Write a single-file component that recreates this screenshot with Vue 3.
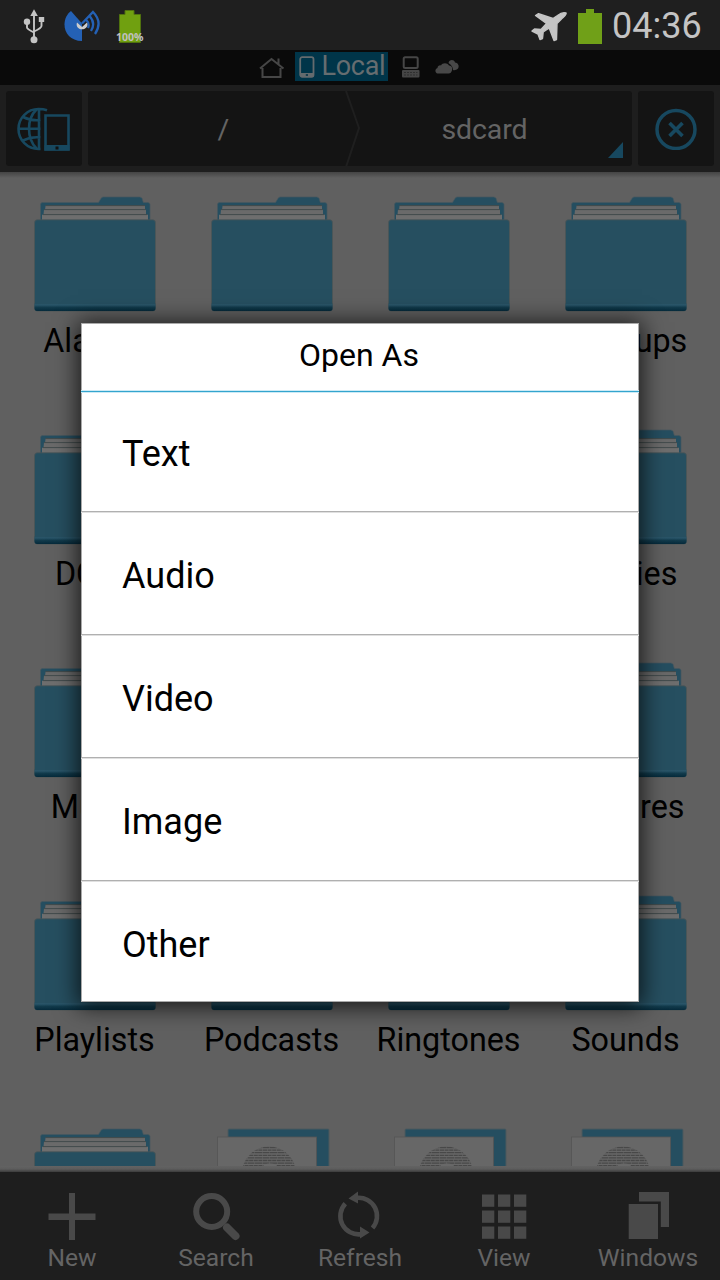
<script setup>
const rows = [
  ['Alarms', '', '', 'Backups'],
  ['DCIM', '', '', 'Movies'],
  ['Music', '', '', 'Pictures'],
  ['Playlists', 'Podcasts', 'Ringtones', 'Sounds'],
]
const lastRow = ['folder', 'file', 'file', 'file']
const items = [
  ...rows.flat().map((label) => ({ label, kind: 'folder' })),
  ...lastRow.map((kind) => ({ label: '', kind })),
]
const options = ['Text', 'Audio', 'Video', 'Image', 'Other']
const stripes = [0, 1, 2, 3, 4, 5, 6, 7]
const cells = [0, 16, 32]
</script>

<template>
  <div class="screen">
    <header class="status">
      <svg class="usb" width="24" height="36" viewBox="0 0 24 36" fill="none" stroke="#c4c4c4" stroke-width="1.9">
        <path d="M12 7V30M5 13v6.500q0 1.500 7 5M19.500 11v7q0 2-7.500 5.500" />
        <path d="M8.300 8 12 1.200 15.800 8z" fill="#c4c4c4" stroke="none" />
        <circle cx="5" cy="13.700" r="3.200" fill="#c4c4c4" stroke="none" />
        <rect x="16.800" y="9" width="5.400" height="5" fill="#c4c4c4" stroke="none" />
        <circle cx="12" cy="31.700" r="3.500" fill="#c4c4c4" stroke="none" />
      </svg>
      <svg class="dish" width="38" height="34" viewBox="0 0 38 34">
        <path d="M8 2 19 14.500v17.500C7.500 32 1.500 24 1.500 15.500 1.500 10 4 5 8 2z" fill="#2461b5" />
        <path d="M19 14.500 30 3Q40 13 32 25M26.500 7q6.500 7 1.500 15M23 10.500q4 4 2 8.500" fill="none" stroke="#2461b5" stroke-width="2.300" />
        <path d="M14 13.500 19 18l5-4.500c1.500 3.500-1 6.800-5 6.800s-6.300-3.300-5-6.800z" fill="#ccc" />
      </svg>
      <div class="battery-small">
        <svg width="22" height="33" viewBox="0 0 22 33">
          <path d="M.5 4.500H6V.5h9v4h6.500v28H.5z" fill="#70a010" stroke="#50720e" />
        </svg>
        <span class="pct">100%</span>
      </div>
      <svg class="plane" width="38" height="32" viewBox="0 0 38 32">
        <path d="M36 3c-2.500-1-6 .5-8.500 2.500l-4.500 3L8.500 3.700 5.500 5.500 16.500 13.500l-5.500 6-6.500-.5L2 21l6 3L10 29.500l2.500-1 .7-6.500 6-4L24 30.500l2.500-1 .5-16 4-4C34 6.500 37 4.500 36 3z" fill="#c4c4c4" stroke="#c4c4c4" stroke-width="1.400" stroke-linejoin="round" />
      </svg>
      <svg class="battery" width="24" height="35" viewBox="0 0 24 35">
        <path d="M0 4h8V0h8v4h8v31H0z" fill="#70a018" />
      </svg>
      <span class="clock">04:36</span>
    </header>

    <nav class="tabs">
      <svg class="home" width="26" height="22" viewBox="0 0 26 22" fill="none" stroke="#464646" stroke-width="2">
        <path d="M1 11.500 12.500 2l12 9.500M3.500 11v9h18v-9M19.500 7V1.500" />
      </svg>
      <div class="tab-active">
        <svg width="16" height="22" viewBox="0 0 16 22">
          <rect x="1.200" y="1.200" width="13.300" height="19.600" rx="2" fill="none" stroke="#646b6e" stroke-width="1.800" />
          <path d="M1.500 17h13v3.800h-13z" fill="#646b6e" />
          <rect x="6.800" y="18.200" width="2.200" height="1.600" fill="#063448" />
        </svg>
        <span class="tab-label">Local</span>
      </div>
      <svg class="pc" width="20" height="23" viewBox="0 0 20 23">
        <rect x="2.700" y="1.200" width="14" height="10.800" rx="1.500" fill="none" stroke="#464646" stroke-width="2" />
        <rect x="1" y="14" width="17.500" height="7.500" rx="1" fill="#464646" />
        <path d="M3 16.500h13.500M3 19h13.500" stroke="#2a2a2a" stroke-width=".8" stroke-dasharray="2 1" />
      </svg>
      <svg class="cloud" width="26" height="16" viewBox="0 0 26 16" fill="#484848">
        <path d="M3.500 14.500C1 14 .5 10 3.500 9c0-2 2-3 3.500-2.500C8 4 13 3 15 6.500c3.500 0 3.800 4 2.500 6-.8 2-2.500 2-4 2z" />
        <path d="M14.500 4C15 .5 20 0 21 3.500c3.500.5 4.500 4 3 6-1.500 1.500-3.500 2-5 1.500-.1-2.500-1-4.500-4.500-7z" />
      </svg>
    </nav>

    <div class="pathbar">
      <div class="tile globe">
        <svg width="54" height="46" viewBox="0 0 54 46" fill="none" stroke="#17485f" stroke-width="2.600">
          <path d="M23.500 43h-2a20 20 0 0 1 0-40q5 0 8.500 1.200M22 3v40M2 22.800h21.500M19.500 3.500C9.500 13 9.500 32 19.500 42.500M6 11q8 4 17.500 3M6 34.500q8-4 17.500-3" />
          <path d="M28.500 9.500h23V43.500H28.500z" />
          <path d="M27.500 39h25v5.500h-25z" fill="#17485f" stroke="none" />
          <rect x="38.500" y="40.500" width="3" height="3" fill="#111" stroke="none" />
        </svg>
      </div>
      <div class="crumbs">
        <span class="crumb root">/</span>
        <svg class="chevron" width="16" height="76" viewBox="0 0 16 76"><path d="M1 0 14 37 1 76" fill="none" stroke="#1f1f1f" stroke-width="2" /></svg>
        <span class="crumb leaf">sdcard</span>
        <svg class="corner" width="15" height="16" viewBox="0 0 15 16"><path d="M15 0v16H0z" fill="#17485f" /></svg>
      </div>
      <div class="tile">
        <svg width="42" height="42" viewBox="0 0 42 42" fill="none" stroke="#17485f">
          <circle cx="21" cy="21.500" r="19" stroke-width="3.500" />
          <path d="m14.500 15 13 13m0-13-13 13" stroke-width="3.600" />
        </svg>
      </div>
    </div>

    <main class="content">
      <div class="grid">
        <div v-for="(item, i) in items" :key="i" class="cell">
          <svg v-if="item.kind === 'folder'" class="icon" width="124" height="118" viewBox="0 0 124 118">
            <defs>
              <linearGradient :id="'edge' + i" x1="0" y1="0" x2="0" y2="1">
                <stop offset="0" stop-color="#264f60" />
                <stop offset=".18" stop-color="#2a566a" />
                <stop offset=".5" stop-color="#123b4c" />
                <stop offset="1" stop-color="#052a3b" />
              </linearGradient>
            </defs>
            <path d="M7.500 27V8.500q0-2 2-2H65.500l2.500-4q.8-1.500 2-1.500h36.500q2 0 2.600 1.500l1.200 4h4.200q2.500 0 2.500 2V27z" fill="#254e60" stroke="#46585f" stroke-width=".7" />
            <path d="M12.500 9.800h99.500v4.500H12z" fill="#696969" />
            <path d="M11 13.600h102v5.400H10.500z" fill="#6a6a6a" />
            <path d="M9 18.700h106v6H9z" fill="#6e6e6e" />
            <path d="M12.500 9.600H112M11 13.600H113M10 18.600H114" stroke="#424a4c" />
            <path d="M1.500 27q0-3.200 2.500-3.200H120q2.500 0 2.500 3.200V112q0 3-2.500 3H4q-2.500 0-2.500-3z" fill="#264f60" stroke="#4c5557" stroke-width=".8" />
            <path d="M1.500 107.500h121v4.500q0 3-2.500 3H4q-2.500 0-2.500-3z" :fill="`url(#edge${i})`" />
          </svg>
          <svg v-else class="icon" width="124" height="118" viewBox="0 0 124 118">
            <rect x="18" y="1" width="101" height="100" rx="1" fill="#254e60" stroke="#4c585c" />
            <rect x="7.500" y="9" width="99" height="106" fill="#676767" stroke="#555" stroke-width=".8" />
            <clipPath :id="'globe' + i"><circle cx="59" cy="45.500" r="27" /></clipPath>
            <g :clip-path="`url(#globe${i})`">
              <path v-for="s in stripes" :key="s" :d="`M30 ${19.500 + s * 2.600}h58`" stroke="#484848" stroke-width="1.300" :stroke-dasharray="s % 2 ? '4 .6' : '7 .5'" />
              <ellipse cx="60" cy="40" rx="8" ry="4.500" fill="#686868" />
            </g>
          </svg>
          <span v-if="item.label" class="name">{{ item.label }}</span>
        </div>
      </div>
    </main>

    <footer class="toolbar">
      <div class="tool">
        <svg width="52" height="52" viewBox="0 0 52 52"><path d="M23 3h6v20.500h20.500v6.500H29v20h-6V30H2.500v-6.500H23z" fill="#494949" /></svg>
        <span>New</span>
      </div>
      <div class="tool">
        <svg width="52" height="52" viewBox="0 0 52 52" fill="none" stroke="#494949">
          <circle cx="21.700" cy="21.500" r="15.500" stroke-width="6" />
          <path d="m37 37.500 8.500 8.500" stroke-width="8" stroke-linecap="round" />
        </svg>
        <span>Search</span>
      </div>
      <div class="tool">
        <svg width="52" height="52" viewBox="0 0 52 52" fill="none" stroke="#494949" stroke-width="4.600">
          <path d="M11.300 13.700A18.200 18.200 0 0 0 27 44.200M38.500 38A18.200 18.200 0 0 0 23 7.900" />
          <path d="m14.500 8.500 9.500-7v12zM35.500 42.500l-9.500-6v12z" fill="#494949" stroke="none" />
        </svg>
        <span>Refresh</span>
      </div>
      <div class="tool">
        <svg width="52" height="52" viewBox="0 0 52 52" fill="#494949">
          <template v-for="y in cells" :key="y">
            <rect v-for="x in cells" :key="x" :x="4 + x" :y="4.500 + y" width="12.300" height="12.300" />
          </template>
        </svg>
        <span>View</span>
      </div>
      <div class="tool">
        <svg width="52" height="52" viewBox="0 0 52 52" fill="#494949"><path d="M6.700 14H36v35H6.700zM17 2h30v35h-8.200V11.500H17z" /></svg>
        <span>Windows</span>
      </div>
    </footer>

    <section class="dialog">
      <h1>Open As</h1>
      <ul>
        <li v-for="o in options" :key="o">{{ o }}</li>
      </ul>
    </section>
  </div>
</template>

<style>
body { margin: 0; }
</style>

<style scoped>
.screen {
  position: relative;
  width: 720px;
  height: 1280px;
  overflow: hidden;
  display: flex;
  flex-direction: column;
  background: #606060;
  font-family: Roboto, "Noto Sans", sans-serif;
}
svg { display: block; flex: none; }
.status {
  height: 50px;
  flex: none;
  box-sizing: border-box;
  background: #1f1f1f;
  display: flex;
  align-items: flex-start;
  padding: 0 18px 0 22px;
}
.usb { margin-top: 8px; }
.dish { margin: 9px 0 0 17px; }
.battery-small { position: relative; margin: 10px 0 0 18px; }
.pct {
  position: absolute;
  left: -3px;
  top: 21px;
  font: bold 10.500px/12px "Open Sans", sans-serif;
  color: #c0c0c0;
}
.plane { margin: 10px 0 0 auto; }
.battery { margin: 9px 0 0 10px; }
.clock { font-size: 36px; line-height: 52px; height: 50px; color: #c4c4c4; margin-left: 10px; width: 90px; white-space: nowrap; }
.tabs {
  height: 35px;
  flex: none;
  background: #0a0a0a;
  display: flex;
  align-items: flex-start;
  padding-left: 259px;
}
.home { margin-top: 7px; }
.tab-active {
  margin: 2px 0 0 10px;
  width: 93px;
  height: 29px;
  background: #003549;
  display: flex;
  align-items: center;
}
.tab-active svg { margin-left: 4px; }
.tab-label { font-size: 27px; line-height: 31px; color: #666d70; margin-left: 6.500px; letter-spacing: -.3px; }
.pc { margin: 6px 0 0 13px; }
.cloud { margin: 9px 0 0 13px; }
.pathbar {
  height: 87px;
  flex: none;
  box-sizing: border-box;
  background: #1e1e1e;
  padding: 6px 6px 5px;
  display: flex;
  gap: 6px;
}
.tile, .crumbs { background: #141414; border-radius: 3px; height: 75px; }
.tile { width: 76px; display: flex; align-items: center; justify-content: center; }
.crumbs { position: relative; flex: 1; display: flex; align-items: center; overflow: hidden; }
.crumb { flex: 1; text-align: center; font-size: 28.500px; color: #646464; padding-top: 1px; }
.root { flex: 0 0 257px; padding-left: 14px; box-sizing: border-box; }
.leaf { padding-right: 24px; letter-spacing: -.1px; }
.corner { position: absolute; right: 9px; bottom: 8px; }
.content {
  position: relative;
  height: 1000px;
  flex: none;
  overflow: hidden;
  box-sizing: border-box;
  padding-top: 24px;
  background: #606060;
}
.content::before, .content::after { content: ""; position: absolute; left: 0; right: 0; height: 6px; }
.content::before { top: 0; background: linear-gradient(#444, #606060); }
.content::after { bottom: 0; background: linear-gradient(#636363, #5c5c5c 50%, #3c3c3c); }
.grid { display: grid; grid-template-columns: repeat(4, 177px); grid-auto-rows: 233px; margin-left: 6.500px; }
.cell { display: flex; flex-direction: column; align-items: center; }
.name { margin: 7px 1px 0 0; font-size: 32.300px; line-height: 40px; color: #000; white-space: nowrap; }
.toolbar { height: 108px; flex: none; background: #1e1e1e; display: grid; grid-template-columns: repeat(5, 144px); }
.tool { display: flex; flex-direction: column; align-items: center; padding-top: 18px; font-size: 24.600px; line-height: 32px; color: #646464; }
.dialog {
  position: absolute;
  left: 81px;
  top: 323px;
  width: 558px;
  height: 679px;
  box-sizing: border-box;
  background: #fff;
  box-shadow: 0 2px 22px 3px rgba(0, 0, 0, .75), inset 0 0 0 1px #aaa;
}
h1 {
  margin: 0;
  height: 69px;
  box-sizing: border-box;
  border-bottom: 1px solid #33a5ce;
  box-shadow: 0 1px #cdeaf5, inset 0 -1px #cdeaf5;
  font-weight: 400;
  font-size: 32px;
  line-height: 64px;
  text-align: center;
  padding-right: 2px;
}
ul { margin: 0; padding: 0; list-style: none; }
li {
  height: 123px;
  box-sizing: border-box;
  padding-left: 41px;
  font-size: 36px;
  line-height: 129px;
  border-bottom: 1px solid #b0b0b0;
  box-shadow: 0 1px #e0e0e0;
}
li:first-child { height: 120px; line-height: 124px; }
li:last-child { border: 0; height: 121px; box-shadow: none; }
</style>
